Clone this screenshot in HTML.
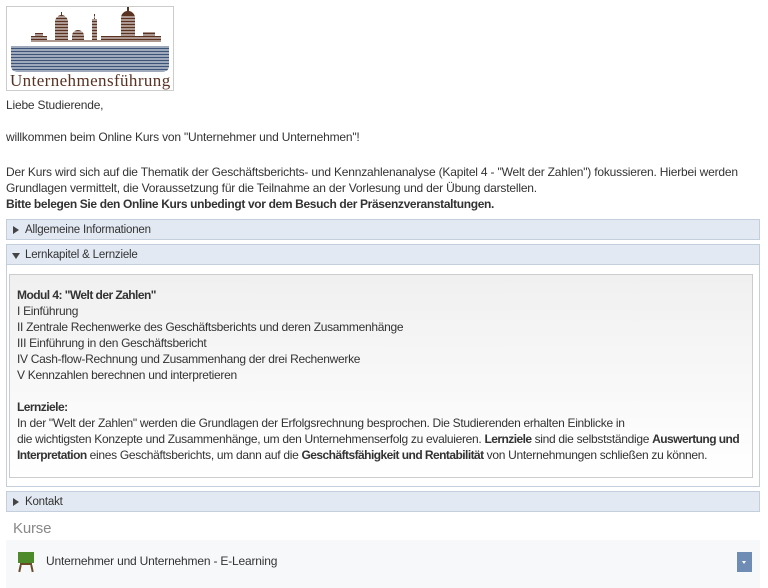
<!DOCTYPE html>
<html><head><meta charset="utf-8"><style>
*{margin:0;padding:0;box-sizing:border-box}
body{width:768px;height:588px;overflow:hidden;background:#fff;font-family:"Liberation Sans",sans-serif;font-size:12px;letter-spacing:-0.19px;color:#333;position:relative}
.a{position:absolute;white-space:nowrap;line-height:16px}
.hdr{position:absolute;left:6px;width:754px;height:21px;background:#e2e9f2;border:1px solid #c3cfdc;font-size:11.5px;color:#333;line-height:21px;padding-left:18px}
.tri{position:absolute;left:6px;top:6px;width:0;height:0}
.r{border-left:6px solid #444;border-top:4px solid transparent;border-bottom:4px solid transparent}
.d{border-top:6px solid #444;border-left:4px solid transparent;border-right:4px solid transparent;top:8px;left:5px}
b{font-weight:bold}
.in b{letter-spacing:-0.55px}
</style></head><body>
<div style="position:absolute;left:6px;top:6px;width:168px;height:85px;border:1px solid #ccc">
<svg width="166" height="83" viewBox="0 0 166 83">
<path fill="#5a3222" d="M24 33v-4h4v-3h8v3h4v4h8v-18a7 7 0 0 1 6-7v-3h1v3a7 7 0 0 1 6 7v18h4v-4a6 6 0 0 1 12 0v4h8v-21h2v-5h1v5h2v21h4v-4h20v-18a7 7 0 0 1 6-7v-5l1-3 1 3v5a7 7 0 0 1 6 7v18h8v-4h12v4h6v6H24z"/>
<path fill="#3d5478" d="M4 39h158v20a6 6 0 0 1-6 6H10a6 6 0 0 1-6-6z"/>
<g stroke="#fff" stroke-width="0.9">
<path d="M0 10h166M0 13h166M0 16h166M0 19h166M0 22h166M0 25h166M0 28h166M0 31h166M0 34h166M0 37h166M0 40h166M0 43h166M0 46h166M0 49h166M0 52h166M0 55h166M0 58h166M0 61h166M0 64h166"/>
</g>
<text x="83" y="79" text-anchor="middle" font-family="Liberation Serif,serif" font-size="17" fill="#5a3222" letter-spacing="-0.2" textLength="160">Unternehmensführung</text>
</svg></div>
<div class="a" style="left:6px;top:97px">Liebe Studierende,</div>
<div class="a" style="left:6px;top:129px">willkommen beim Online Kurs von "Unternehmer und Unternehmen"!</div>
<div class="a" style="left:6px;top:164px">Der Kurs wird sich auf die Thematik der Geschäftsberichts- und Kennzahlenanalyse (Kapitel 4 - "Welt der Zahlen") fokussieren. Hierbei werden</div>
<div class="a" style="left:6px;top:180px">Grundlagen vermittelt, die Voraussetzung für die Teilnahme an der Vorlesung und der Übung darstellen.</div>
<div class="a" style="left:6px;top:196px;letter-spacing:-0.35px"><b>Bitte belegen Sie den Online Kurs unbedingt vor dem Besuch der Präsenzveranstaltungen.</b></div>
<div class="hdr" style="top:219px"><span class="tri r"></span>Allgemeine Informationen</div>
<div style="position:absolute;left:6px;top:244px;width:754px;height:243px;border:1px solid #c3cfdc"></div>
<div class="hdr" style="top:244px"><span class="tri d"></span>Lernkapitel &amp; Lernziele</div>
<div style="position:absolute;left:9px;top:274px;width:744px;height:204px;border:1px solid #ccc;background:linear-gradient(#f0f0f0,#fff)"></div>
<div class="a in" style="left:17px;top:287px;letter-spacing:-0.3px"><b>Modul 4: "Welt der Zahlen"</b><br>I Einführung<br>II Zentrale Rechenwerke des Geschäftsberichts und deren Zusammenhänge<br>III Einführung in den Geschäftsbericht<br>IV Cash-flow-Rechnung und Zusammenhang der drei Rechenwerke<br>V Kennzahlen berechnen und interpretieren<br><br><b>Lernziele:</b><br>In der "Welt der Zahlen" werden die Grundlagen der Erfolgsrechnung besprochen. Die Studierenden erhalten Einblicke in<br>die wichtigsten Konzepte und Zusammenhänge, um den Unternehmenserfolg zu evaluieren. <b>Lernziele</b> sind die selbstständige <b>Auswertung und</b><br><b>Interpretation</b> eines Geschäftsberichts, um dann auf die <b>Geschäftsfähigkeit und Rentabilität</b> von Unternehmungen schließen zu können.</div>
<div class="hdr" style="top:491px"><span class="tri r"></span>Kontakt</div>
<div class="a" style="left:13px;top:521px;font-size:15px;color:#888">Kurse</div>
<div style="position:absolute;left:6px;top:540px;width:754px;height:48px;background:#f7f8fa"></div>
<div style="position:absolute;left:18px;top:552px;width:16px;height:11px;background:#4c8a2a"></div>
<div style="position:absolute;left:20px;top:563px;width:12px;height:2px;background:#6b4a2a"></div>
<div style="position:absolute;left:19px;top:565px;width:2px;height:7px;background:#6b4a2a;transform:rotate(12deg)"></div>
<div style="position:absolute;left:31px;top:565px;width:2px;height:7px;background:#6b4a2a;transform:rotate(-12deg)"></div>
<div class="a" style="left:46px;top:553px;color:#333">Unternehmer und Unternehmen - E-Learning</div>
<div style="position:absolute;left:737px;top:552px;width:15px;height:20px;background:#6f8cb4"><div style="position:absolute;left:5px;top:9px;border-top:3px solid #fff;border-left:2.5px solid transparent;border-right:2.5px solid transparent"></div></div>
</body></html>
